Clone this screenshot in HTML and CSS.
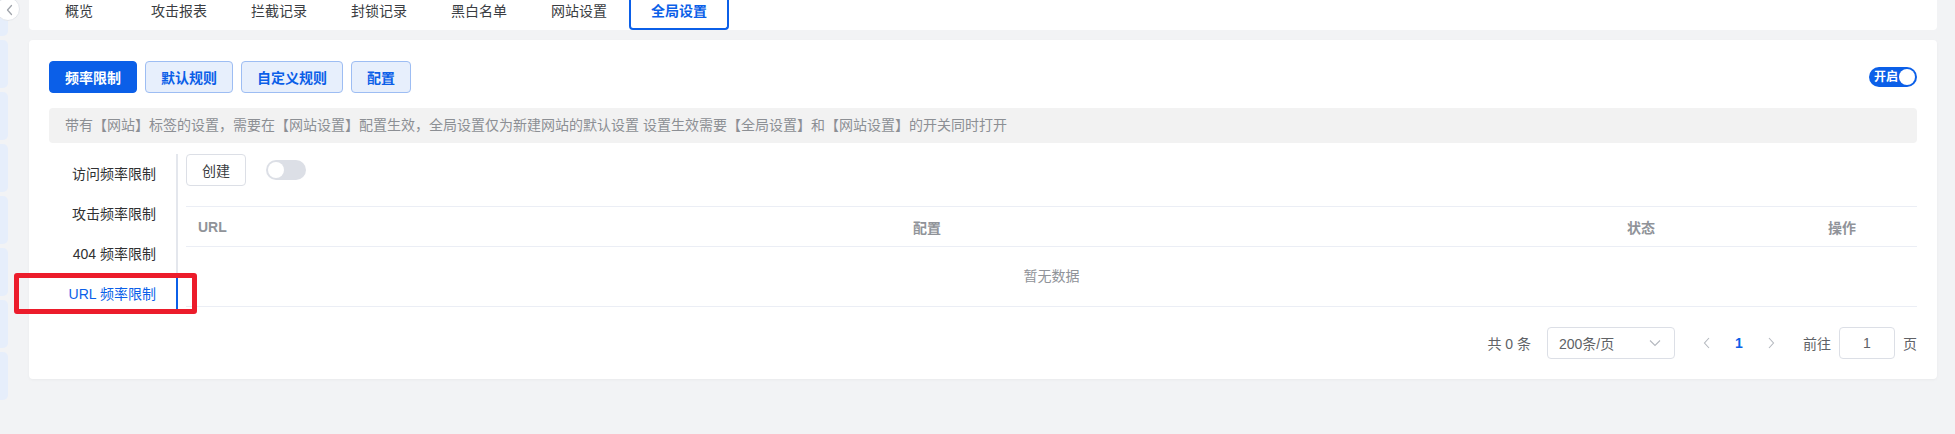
FILE: index.html
```html
<!DOCTYPE html>
<html lang="zh-CN">
<head>
<meta charset="utf-8">
<title>全局设置</title>
<link rel="stylesheet" href="styles.css">
</head>
<body>
<div class="app">
  <aside class="strip">
    <div class="strip-block b1"></div>
    <div class="strip-block"></div>
    <div class="strip-block"></div>
    <div class="strip-block"></div>
    <div class="strip-block"></div>
    <div class="strip-block"></div>
    <div class="strip-block"></div>
    <div class="strip-block"></div>
  </aside>
  <button class="collapse-btn" type="button">
    <svg width="10" height="12" viewBox="0 0 10 12"><path d="M6.5 1.5 L2.5 6 L6.5 10.5" fill="none" stroke="#a0a4ab" stroke-width="1.3" stroke-linecap="round" stroke-linejoin="round"/></svg>
  </button>

  <main class="main">
    <nav class="tabs">
      <div class="tab">概览</div>
      <div class="tab">攻击报表</div>
      <div class="tab">拦截记录</div>
      <div class="tab">封锁记录</div>
      <div class="tab">黑白名单</div>
      <div class="tab">网站设置</div>
      <div class="tab active">全局设置</div>
    </nav>

    <section class="card">
      <div class="toolbar">
        <div class="btn-group">
          <button class="btn btn-primary" type="button">频率限制</button>
          <button class="btn btn-light" type="button">默认规则</button>
          <button class="btn btn-light" type="button">自定义规则</button>
          <button class="btn btn-light" type="button">配置</button>
        </div>
        <div class="switch switch-on"><span class="switch-text">开启</span><span class="knob"></span></div>
      </div>

      <div class="notice">带有【网站】标签的设置，需要在【网站设置】配置生效，全局设置仅为新建网站的默认设置 设置生效需要【全局设置】和【网站设置】的开关同时打开</div>

      <div class="body">
        <ul class="menu">
          <li class="menu-item">访问频率限制</li>
          <li class="menu-item">攻击频率限制</li>
          <li class="menu-item">404 频率限制</li>
          <li class="menu-item active">URL 频率限制</li>
        </ul>

        <div class="content">
          <div class="content-top">
            <button class="btn btn-default" type="button">创建</button>
            <div class="switch switch-off"><span class="knob"></span></div>
          </div>

          <div class="table">
            <div class="thead">
              <div class="th">URL</div>
              <div class="th">配置</div>
              <div class="th">状态</div>
              <div class="th">操作</div>
            </div>
            <div class="empty">暂无数据</div>
          </div>

          <div class="pagination">
            <span class="total">共 0 条</span>
            <div class="select">
              <span>200条/页</span>
              <svg width="12" height="8" viewBox="0 0 12 8"><path d="M1 1.5 L6 6.5 L11 1.5" fill="none" stroke="#b4b8bf" stroke-width="1.1"/></svg>
            </div>
            <span class="pg-btn">
              <svg width="8" height="12" viewBox="0 0 8 12"><path d="M6 1 L1.5 6 L6 11" fill="none" stroke="#b4b8bf" stroke-width="1.1"/></svg>
            </span>
            <span class="pg-num">1</span>
            <span class="pg-btn">
              <svg width="8" height="12" viewBox="0 0 8 12"><path d="M2 1 L6.5 6 L2 11" fill="none" stroke="#b4b8bf" stroke-width="1.1"/></svg>
            </span>
            <span class="jump">前往</span>
            <div class="jump-input">1</div>
            <span class="jump-unit">页</span>
          </div>
        </div>
      </div>
    </section>
  </main>

  <div class="annotation"></div>
</div>
</body>
</html>
```

FILE: styles.css
```css
* { box-sizing: border-box; }

html, body {
  margin: 0;
  padding: 0;
}

body {
  background: #f2f3f5;
  font-family: "Liberation Sans", "Noto Sans CJK SC", sans-serif;
  font-size: 14px;
  color: #303133;
  width: 1955px;
  height: 434px;
  overflow: hidden;
}

.app {
  position: relative;
  display: flex;
  height: 434px;
}

/* left sidebar edge */
.strip {
  width: 8px;
  flex: none;
  display: flex;
  flex-direction: column;
  gap: 4px;
  padding-top: 0;
}

.strip-block {
  height: 48px;
  background: #e6eefb;
  border-radius: 0 5px 5px 0;
}

.strip-block.b1 { height: 36px; }

.collapse-btn {
  position: absolute;
  left: -4px;
  top: -3px;
  width: 24px;
  height: 24px;
  border-radius: 50%;
  border: 1px solid #e3e6eb;
  background: #fff;
  padding: 0;
  display: flex;
  align-items: center;
  justify-content: center;
  padding-left: 4px;
  padding-top: 2px;
}

.main {
  flex: 1;
  padding: 0 18px 0 21px;
  min-width: 0;
}

/* top tabs */
.tabs {
  display: flex;
  height: 30px;
  background: #fff;
  border-radius: 0 0 4px 4px;
}

.tab {
  width: 100px;
  height: 30px;
  text-align: center;
  line-height: 22px;
  font-size: 14px;
  color: #3a3d42;
}

.tab.active {
  color: #0b5fe8;
  font-weight: 600;
  border: 2px solid #0b5fe8;
  border-top: none;
  border-radius: 0 0 4px 4px;
}

/* card */
.card {
  margin-top: 10px;
  background: #fff;
  border-radius: 4px;
  padding: 21px 20px 20px 20px;
  box-shadow: 0 1px 3px rgba(0, 0, 0, 0.04);
}

.toolbar {
  display: flex;
  align-items: center;
  justify-content: space-between;
  height: 32px;
}

.btn-group {
  display: flex;
  gap: 8px;
}

.btn {
  height: 32px;
  padding: 0 15px;
  border-radius: 4px;
  font-family: inherit;
  font-size: 14px;
  cursor: pointer;
}

.btn-primary {
  background: #0b5fe8;
  border: 1px solid #0b5fe8;
  color: #fff;
  font-weight: 700;
}

.btn-light {
  background: #e7effc;
  border: 1px solid #9dbdf3;
  color: #0b5fe8;
  font-weight: 700;
}

.btn-default {
  width: 60px;
  background: #fff;
  border: 1px solid #dcdfe6;
  color: #3a3d42;
  padding: 0;
}

/* switches */
.switch {
  position: relative;
  height: 20px;
  border-radius: 10px;
  display: flex;
  align-items: center;
}

.switch-on {
  width: 48px;
  background: #0b5fe8;
  padding-left: 5px;
}

.switch-text {
  color: #fff;
  font-size: 12px;
  font-weight: 700;
  line-height: 20px;
}

.switch .knob {
  position: absolute;
  top: 2px;
  width: 16px;
  height: 16px;
  border-radius: 50%;
  background: #fff;
}

.switch-on .knob { right: 2px; }

.switch-off {
  width: 40px;
  background: #dcdfe6;
}

.switch-off .knob { left: 2px; }

/* notice */
.notice {
  margin-top: 15px;
  height: 35px;
  line-height: 35px;
  padding: 0 16px;
  background: #f2f2f2;
  border-radius: 4px;
  color: #8c8f94;
  font-size: 14px;
  white-space: nowrap;
}

/* body */
.body {
  display: flex;
  margin-top: 11px;
}

.menu {
  list-style: none;
  margin: 0;
  padding: 0;
  width: 129px;
  flex: none;
  border-right: 2px solid #e4e7ed;
  align-self: flex-start;
}

.menu-item {
  height: 40px;
  line-height: 40px;
  text-align: right;
  padding-right: 20px;
  margin-right: -2px;
  border-right: 2px solid transparent;
  color: #303133;
  font-size: 14px;
}

.menu-item.active {
  color: #0b5fe8;
  border-right-color: #0b5fe8;
}

.content {
  flex: 1;
  min-width: 0;
  padding-left: 8px;
}

.content-top {
  display: flex;
  align-items: center;
  gap: 20px;
  height: 32px;
}

/* table */
.table {
  margin-top: 20px;
  border-top: 1px solid #ebeef5;
}

.thead {
  display: grid;
  grid-template-columns: 715px 714px 201px 1fr;
  height: 40px;
  align-items: center;
  border-bottom: 1px solid #ebeef5;
}

.th {
  padding-left: 12px;
  color: #909399;
  font-weight: 700;
  font-size: 14px;
}

.empty {
  height: 60px;
  line-height: 59px;
  text-align: center;
  color: #909399;
  font-size: 14px;
  border-bottom: 1px solid #ebeef5;
}

/* pagination */
.pagination {
  margin-top: 20px;
  height: 32px;
  display: flex;
  align-items: center;
  justify-content: flex-end;
  color: #606266;
  font-size: 14px;
}

.total { margin-right: 16px; }

.select {
  width: 128px;
  height: 32px;
  border: 1px solid #dcdfe6;
  border-radius: 4px;
  display: flex;
  align-items: center;
  justify-content: space-between;
  padding: 0 13px 0 11px;
  color: #606266;
  margin-right: 16px;
}

.pg-btn {
  width: 32px;
  height: 32px;
  display: flex;
  align-items: center;
  justify-content: center;
}

.pg-num {
  width: 32px;
  text-align: center;
  color: #0b5fe8;
  font-weight: 700;
}

.jump {
  margin-left: 16px;
  margin-right: 8px;
}

.jump-input {
  width: 56px;
  height: 32px;
  border: 1px solid #dcdfe6;
  border-radius: 4px;
  text-align: center;
  line-height: 30px;
  color: #606266;
  margin-right: 8px;
}

/* red annotation box drawn over the screenshot */
.annotation {
  position: absolute;
  left: 14px;
  top: 273px;
  width: 183px;
  height: 41px;
  border: 5px solid #ec1c2b;
  border-radius: 3px;
  pointer-events: none;
}
```
